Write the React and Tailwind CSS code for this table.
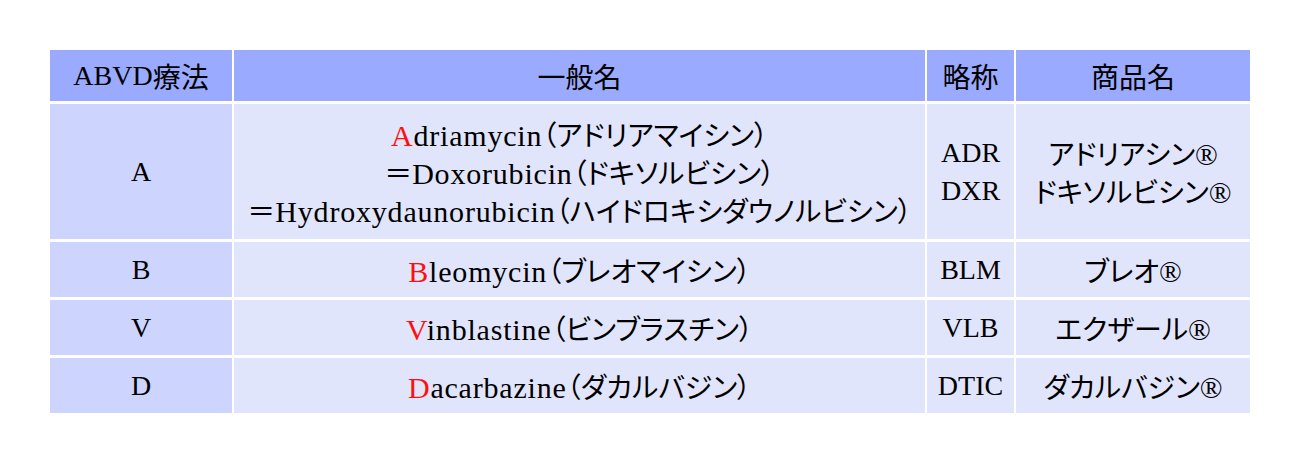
import React from "react";

const rows = [
  {
    key: "A",
    names: [
      { red: "A", rest: "driamycin", kana: "アドリアマイシン" },
      { eq: true, rest: "Doxorubicin", kana: "ドキソルビシン" },
      { eq: true, rest: "Hydroxydaunorubicin", kana: "ハイドロキシダウノルビシン" }
    ],
    abbr: ["ADR", "DXR"],
    brand: ["アドリアシン", "ドキソルビシン"]
  },
  { key: "B", names: [{ red: "B", rest: "leomycin", kana: "ブレオマイシン" }], abbr: ["BLM"], brand: ["ブレオ"] },
  { key: "V", names: [{ red: "V", rest: "inblastine", kana: "ビンブラスチン" }], abbr: ["VLB"], brand: ["エクザール"] },
  { key: "D", names: [{ red: "D", rest: "acarbazine", kana: "ダカルバジン" }], abbr: ["DTIC"], brand: ["ダカルバジン"] }
];

function J({ children }) {
  return <span className="font-['Noto_Sans_CJK_JP',sans-serif] text-[28px] [font-feature-settings:'palt']">{children}</span>;
}

function Name({ name }) {
  return (
    <div className="h-[38px] leading-[38px] text-[30px] whitespace-nowrap">
      {name.eq && <J>＝</J>}
      <span className="tracking-[0.8px]">
        {name.red && <span className="text-[#ff1010]">{name.red}</span>}
        {name.rest}
      </span>
      <J>（{name.kana}）</J>
    </div>
  );
}

export default function App() {
  return (
    <div className="w-[1300px] h-[464px] bg-white pt-[50px] pl-[50px] font-['Liberation_Serif','Noto_Sans_CJK_JP',serif] text-black">
      <div className="grid w-[1200px] grid-cols-[182px_691px_87px_234px] gap-x-[2px] gap-y-[3px] grid-rows-[51px_135px_55px_55px_55px]">
        <div className="bg-[#9aabff] flex items-center justify-center text-[28px]">
          ABVD<J>療法</J>
        </div>
        <div className="bg-[#9aabff] flex items-center justify-center"><J>一般名</J></div>
        <div className="bg-[#9aabff] flex items-center justify-center"><J>略称</J></div>
        <div className="bg-[#9aabff] flex items-center justify-center"><J>商品名</J></div>

        {rows.map((r) => (
          <React.Fragment key={r.key}>
            <div className="bg-[#cdd5fe] flex items-center justify-center text-[28px]">{r.key}</div>
            <div className="bg-[#e1e5fc] flex flex-col items-center justify-center">
              {r.names.map((n) => <Name key={n.rest} name={n} />)}
            </div>
            <div className="bg-[#e1e5fc] flex flex-col items-center justify-center text-[28px]">
              {r.abbr.map((a) => <div key={a} className="h-[38px] leading-[38px]">{a}</div>)}
            </div>
            <div className="bg-[#e1e5fc] flex flex-col items-center justify-center">
              {r.brand.map((b) => (
                <div key={b} className="h-[38px] leading-[38px] text-[28px] whitespace-nowrap">
                  <J>{b}</J><span className="text-[30px]">®</span>
                </div>
              ))}
            </div>
          </React.Fragment>
        ))}
      </div>
    </div>
  );
}
